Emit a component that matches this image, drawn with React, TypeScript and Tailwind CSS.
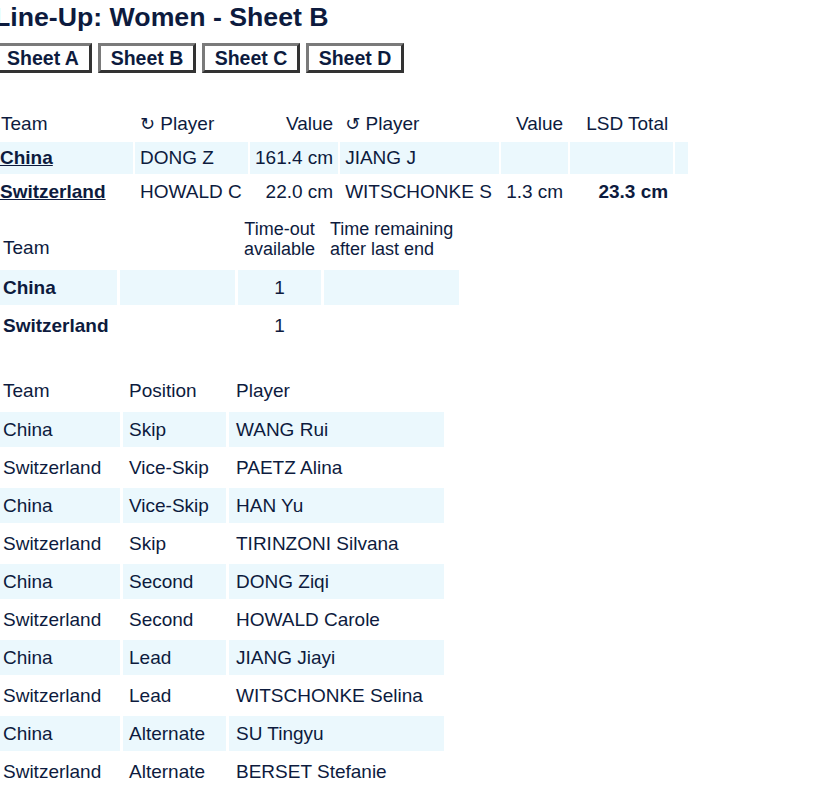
const lineup = [
  ["China", "Skip", "WANG Rui"],
  ["Switzerland", "Vice-Skip", "PAETZ Alina"],
  ["China", "Vice-Skip", "HAN Yu"],
  ["Switzerland", "Skip", "TIRINZONI Silvana"],
  ["China", "Second", "DONG Ziqi"],
  ["Switzerland", "Second", "HOWALD Carole"],
  ["China", "Lead", "JIANG Jiayi"],
  ["Switzerland", "Lead", "WITSCHONKE Selina"],
  ["China", "Alternate", "SU Tingyu"],
  ["Switzerland", "Alternate", "BERSET Stefanie"],
];

const sheets = ["Sheet A", "Sheet B", "Sheet C", "Sheet D"];

export default function App() {
  return (
    <div
      className="-ml-[6px] text-[19px] leading-[22px] text-[#0d1b3e] bg-white min-h-screen whitespace-nowrap"
      style={{ fontFamily: '"Liberation Sans", Arial, sans-serif' }}
    >
      <h1 className="pt-[2px] text-[26.7px] leading-[31px] font-bold">
        Line-Up: Women - Sheet B
      </h1>

      <div className="mt-[10px] flex gap-[6px]">
        {sheets.map((s) => (
          <button
            key={s}
            className="h-[30px] w-[98px] bg-white border-[3px] border-t-[#7a7a7a] border-l-[#7a7a7a] border-b-[#333333] border-r-[#333333] text-[19.5px] font-bold leading-[22px]"
          >
            {s}
          </button>
        ))}
      </div>

      <table className="mt-[33px] -ml-[1px] border-separate border-spacing-[2px] table-fixed">
        <thead>
          <tr className="h-[32px]">
            <th className="w-[138px] px-[6px] text-left font-normal">Team</th>
            <th className="w-[113px] px-[5px] text-left font-normal">
              <span style={{ fontFamily: '"DejaVu Sans", sans-serif' }} className="text-[18px]">↻</span> Player
            </th>
            <th className="w-[88px] px-[5px] text-right font-normal">Value</th>
            <th className="w-[159px] px-[5px] text-left font-normal">
              <span style={{ fontFamily: '"DejaVu Sans", sans-serif' }} className="text-[18px]">↺</span> Player
            </th>
            <th className="w-[67px] px-[5px] text-right font-normal">Value</th>
            <th className="w-[103px] px-[5px] text-right font-normal">LSD Total</th>
            <th className="w-[13px]"></th>
          </tr>
        </thead>
        <tbody>
          <tr className="h-[32px]">
            <td className="bg-[#ebf8fd] px-[5px] font-bold underline">China</td>
            <td className="bg-[#ebf8fd] px-[5px]">DONG Z</td>
            <td className="bg-[#ebf8fd] px-[5px] text-right">161.4 cm</td>
            <td className="bg-[#ebf8fd] px-[5px]">JIANG J</td>
            <td className="bg-[#ebf8fd] px-[5px] text-right"></td>
            <td className="bg-[#ebf8fd] px-[5px] text-right"></td>
            <td className="bg-[#ebf8fd]"></td>
          </tr>
          <tr className="h-[32px]">
            <td className="px-[5px] font-bold underline">Switzerland</td>
            <td className="px-[5px]">HOWALD C</td>
            <td className="px-[5px] text-right">22.0 cm</td>
            <td className="px-[5px]">WITSCHONKE S</td>
            <td className="px-[5px] text-right">1.3 cm</td>
            <td className="px-[5px] text-right font-bold">23.3 cm</td>
            <td></td>
          </tr>
        </tbody>
      </table>

      <table className="mt-[3px] border-separate border-spacing-[3px] table-fixed">
        <thead>
          <tr className="h-[51px]">
            <th className="w-[120px] px-[6px] pb-[8px] text-left font-normal align-bottom">Team</th>
            <th className="w-[115px]"></th>
            <th className="w-[83px] px-[2px] pb-[8px] text-center font-normal text-[18px] leading-[20px] align-bottom">
              Time-out<br />available
            </th>
            <th className="w-[135px] px-[6px] pb-[8px] text-left font-normal text-[18px] leading-[20px] align-bottom">
              Time remaining<br />after last end
            </th>
          </tr>
        </thead>
        <tbody>
          <tr className="h-[35px]">
            <td className="bg-[#ebf8fd] px-[6px] font-bold">China</td>
            <td className="bg-[#ebf8fd]"></td>
            <td className="bg-[#ebf8fd] text-center">1</td>
            <td className="bg-[#ebf8fd]"></td>
          </tr>
          <tr className="h-[35px]">
            <td className="px-[6px] font-bold">Switzerland</td>
            <td></td>
            <td className="text-center">1</td>
            <td></td>
          </tr>
        </tbody>
      </table>

      <table className="mt-[24px] border-separate border-spacing-[3px] table-fixed">
        <thead>
          <tr className="h-[36px]">
            <th className="w-[123px] px-[6px] text-left font-normal">Team</th>
            <th className="w-[103px] px-[6px] text-left font-normal">Position</th>
            <th className="w-[215px] px-[7px] text-left font-normal">Player</th>
          </tr>
        </thead>
        <tbody>
          {lineup.map(([team, pos, player], i) => (
            <tr key={i} className="h-[35px]">
              <td className={`px-[6px] ${i % 2 === 0 ? "bg-[#ebf8fd]" : ""}`}>{team}</td>
              <td className={`px-[6px] ${i % 2 === 0 ? "bg-[#ebf8fd]" : ""}`}>{pos}</td>
              <td className={`px-[7px] ${i % 2 === 0 ? "bg-[#ebf8fd]" : ""}`}>{player}</td>
            </tr>
          ))}
        </tbody>
      </table>
    </div>
  );
}
